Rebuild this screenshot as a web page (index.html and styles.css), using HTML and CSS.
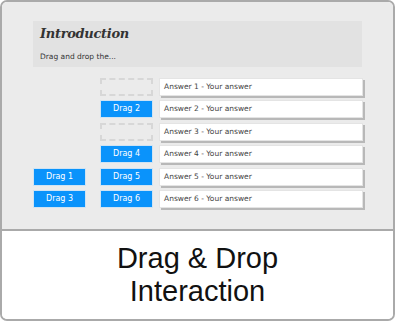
FILE: index.html
```html
<!DOCTYPE html>
<html lang="en">
  <head>
    <meta charset="UTF-8" />
    <title>Drag &amp; Drop Interaction</title>
    <link rel="stylesheet" href="styles.css">
  </head>
  <body>
    <div class="card">
      <div class="stage">
        <div class="intro">
          <div class="intro-title">Introduction</div>
          <div class="intro-text">Drag and drop the...</div>
        </div>
        <div class="board">
          <!-- items not placed yet -->
          <div class="bank">
            <div class="drag">Drag 1</div>
            <div class="drag">Drag 3</div>
          </div>
          <div class="matches">
            <div class="row">
              <div class="drop"></div>
              <div class="answer">Answer 1 - Your answer</div>
            </div>
            <div class="row">
              <div class="drag">Drag 2</div>
              <div class="answer">Answer 2 - Your answer</div>
            </div>
            <div class="row">
              <div class="drop"></div>
              <div class="answer">Answer 3 - Your answer</div>
            </div>
            <div class="row">
              <div class="drag">Drag 4</div>
              <div class="answer">Answer 4 - Your answer</div>
            </div>
            <div class="row">
              <div class="drag">Drag 5</div>
              <div class="answer">Answer 5 - Your answer</div>
            </div>
            <div class="row">
              <div class="drag">Drag 6</div>
              <div class="answer">Answer 6 - Your answer</div>
            </div>
          </div>
        </div>
      </div>
      <div class="caption">
        <div class="caption-line">Drag &amp; Drop</div>
        <div class="caption-line">Interaction</div>
      </div>
    </div>
  </body>
</html>
```

FILE: styles.css
```css
* {
  margin: 0;
  padding: 0;
  box-sizing: border-box;
}

body {
  background: #fff;
  font-family: "DejaVu Sans", Verdana, sans-serif;
}

.card {
  width: 395px;
  height: 321px;
  border: 2px solid #aaa;
  border-radius: 7px;
  overflow: hidden;
  display: flex;
  flex-direction: column;
}

.stage {
  height: 229px;
  background-color: #ebebeb;
  border-bottom: 2px solid #aaa;
  padding: 19px 0 0 31px;
}

.intro {
  width: 329px;
  height: 46px;
  background-color: #e2e2e2;
  padding: 4px 0 0 7px;
}

.intro-title {
  font-family: "DejaVu Serif", serif;
  font-style: italic;
  font-weight: bold;
  font-size: 13px;
  line-height: 18px;
  color: #333;
  letter-spacing: -0.3px;
}

.intro-text {
  font-size: 7.5px;
  line-height: 12px;
  margin-top: 8px;
  color: #333;
}

.board {
  display: flex;
  margin-top: 11px;
}

.bank {
  width: 53px;
  margin-right: 14px;
  display: flex;
  flex-direction: column;
  justify-content: flex-end;
  gap: 4.4px;
}

.matches {
  display: flex;
  flex-direction: column;
  gap: 4.4px;
}

.row {
  display: flex;
  gap: 6px;
}

.drag,
.drop {
  width: 53px;
  height: 18px;
}

.drag {
  background-color: #0a93fb;
  border: 1px solid #cfe3f3;
  color: #fff;
  font-size: 8px;
  line-height: 16px;
  text-align: center;
}

.drop {
  border: 2px dashed #d7d7d7;
}

.answer {
  width: 204px;
  height: 18px;
  background-color: #fff;
  border: 1px solid #e4e4e4;
  box-shadow: 2px 2px 0 #b8b8b8;
  font-size: 7.5px;
  line-height: 16px;
  padding-left: 4px;
  color: #444;
}

.caption {
  flex: 1;
  background: #fff;
  display: flex;
  flex-direction: column;
  align-items: center;
  justify-content: center;
  font-family: "Liberation Sans", Arial, sans-serif;
  font-size: 29px;
  color: #111;
  padding-bottom: 1px;
}

.caption-line {
  line-height: 32.5px;
}
```
